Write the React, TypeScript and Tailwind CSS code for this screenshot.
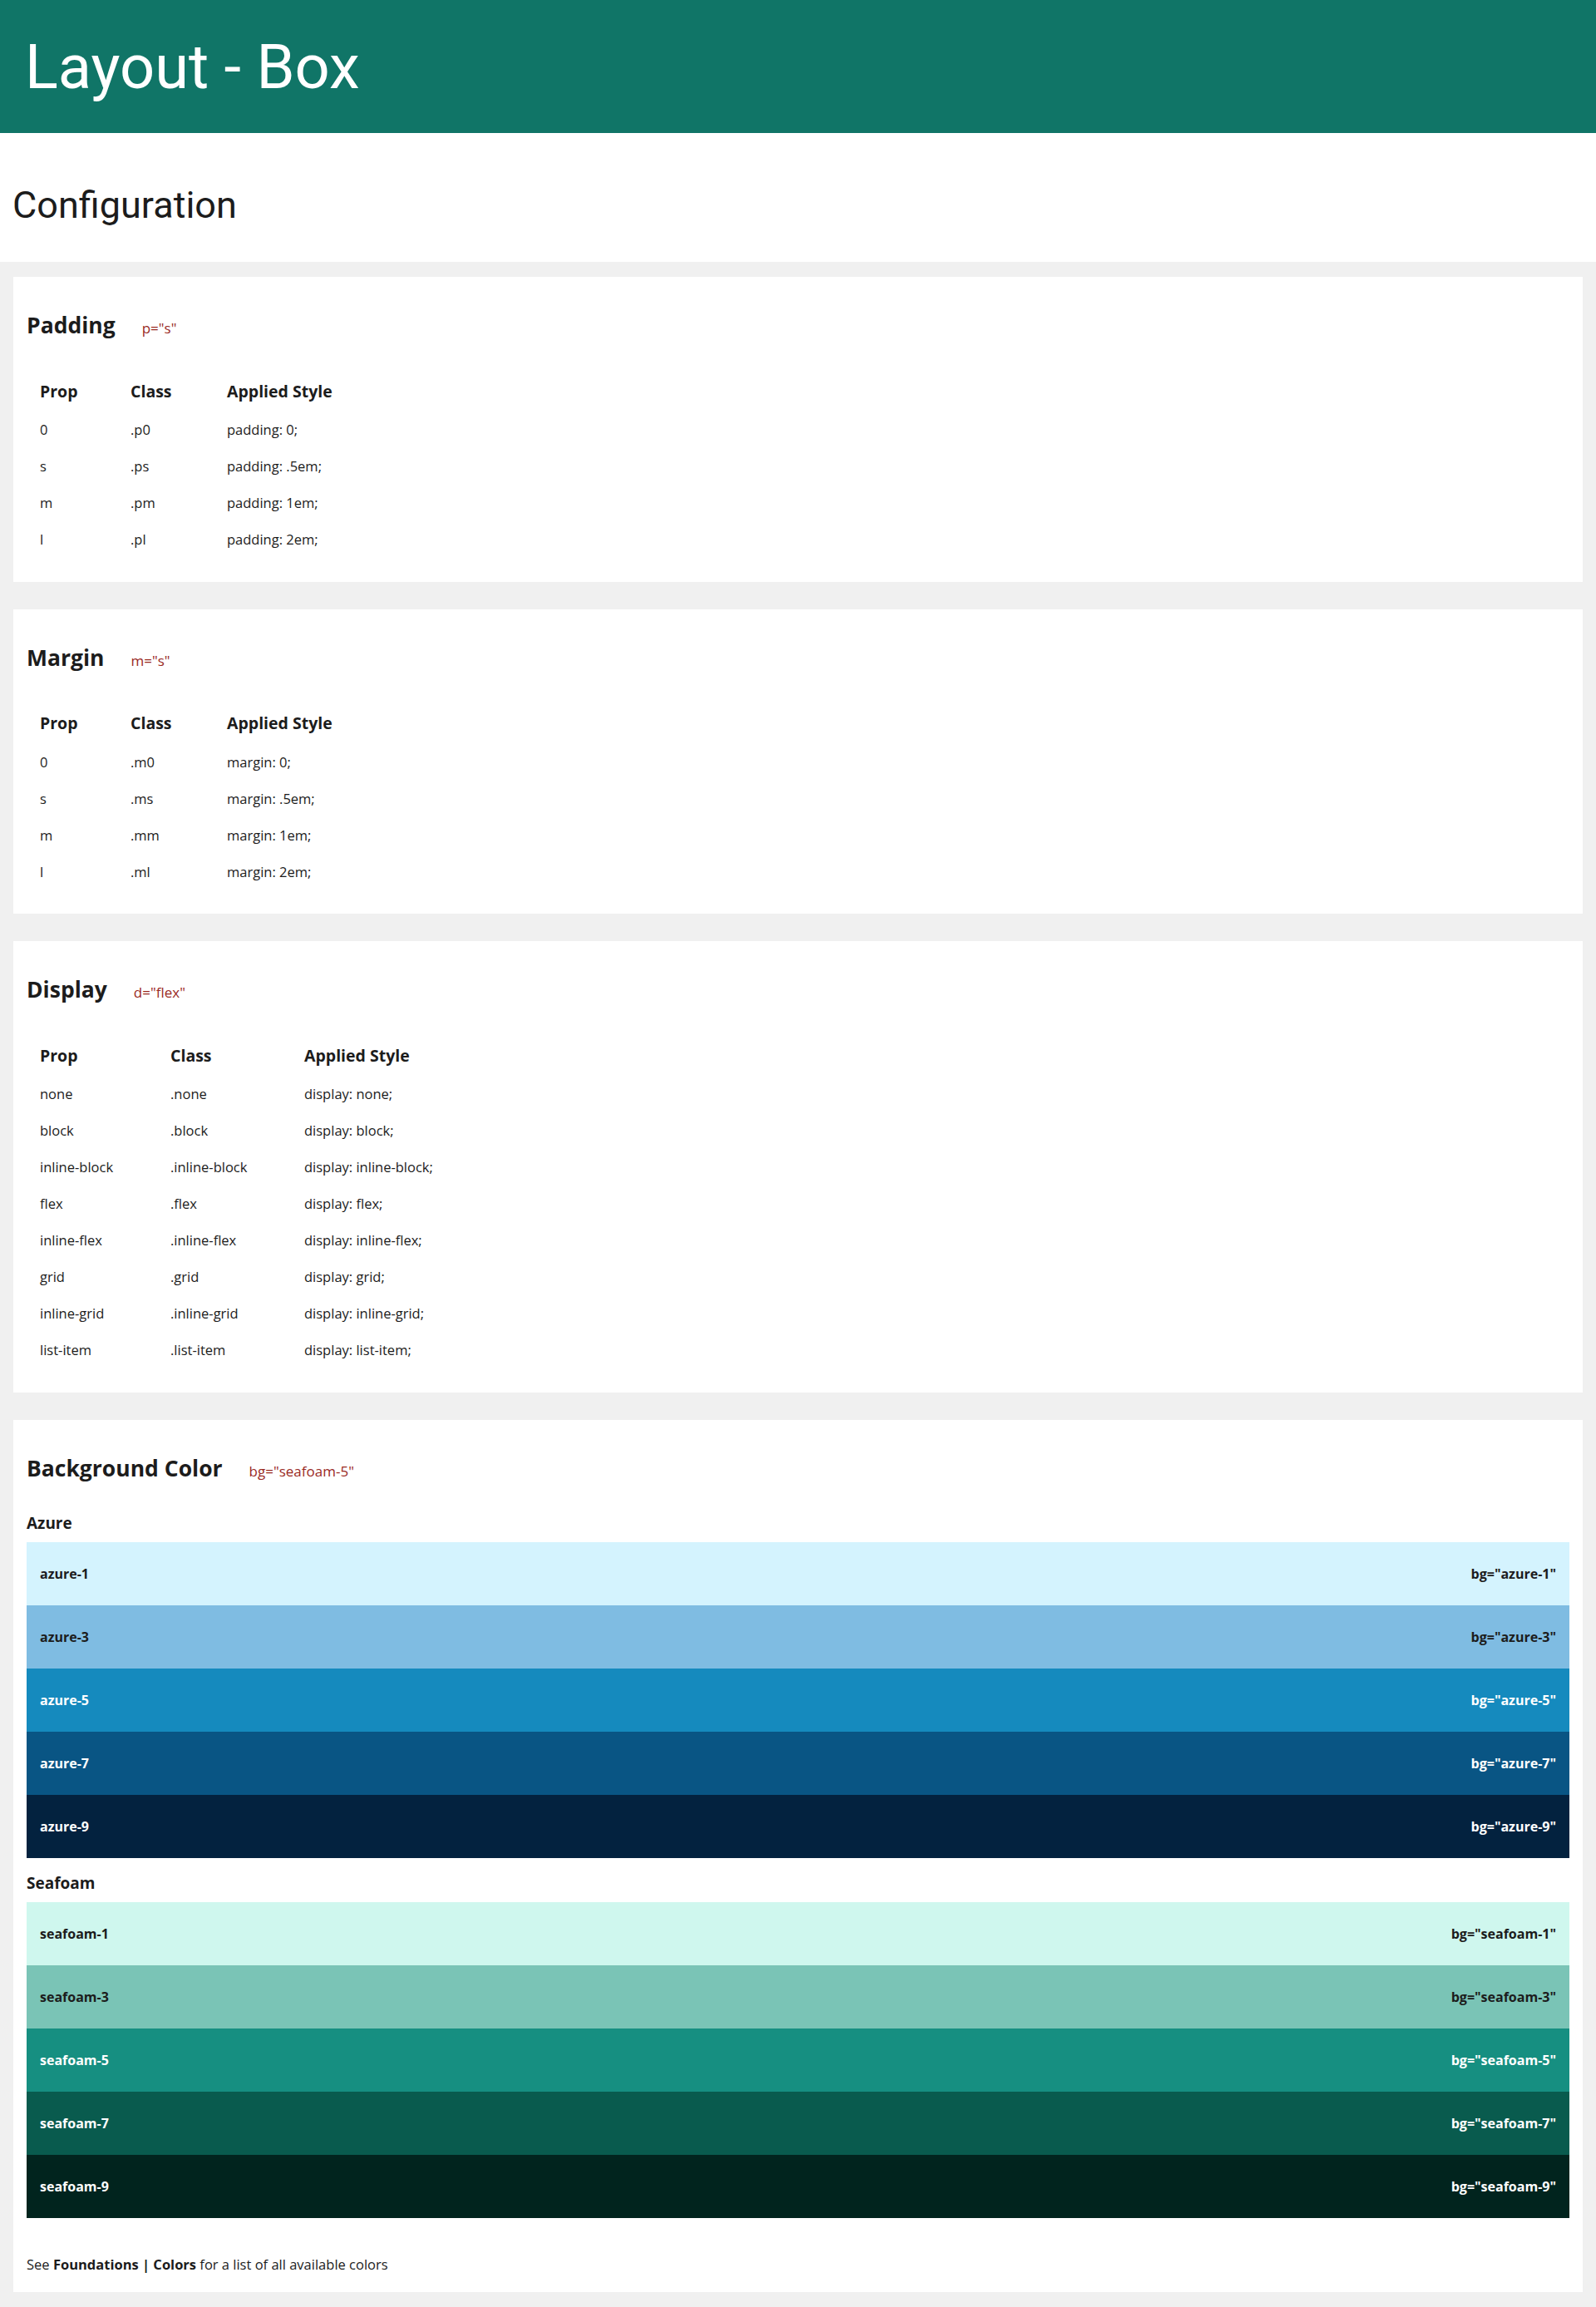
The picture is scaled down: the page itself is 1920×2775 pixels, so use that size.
import type { ReactNode } from 'react'

interface StyleRow {
  prop: string
  cls: string
  style: string
}

interface Swatch {
  name: string
  bg: string
  light: boolean
}

const paddingRows: StyleRow[] = [
  { prop: '0', cls: '.p0', style: 'padding: 0;' },
  { prop: 's', cls: '.ps', style: 'padding: .5em;' },
  { prop: 'm', cls: '.pm', style: 'padding: 1em;' },
  { prop: 'l', cls: '.pl', style: 'padding: 2em;' },
]

const marginRows: StyleRow[] = [
  { prop: '0', cls: '.m0', style: 'margin: 0;' },
  { prop: 's', cls: '.ms', style: 'margin: .5em;' },
  { prop: 'm', cls: '.mm', style: 'margin: 1em;' },
  { prop: 'l', cls: '.ml', style: 'margin: 2em;' },
]

const displayRows: StyleRow[] = [
  'none',
  'block',
  'inline-block',
  'flex',
  'inline-flex',
  'grid',
  'inline-grid',
  'list-item',
].map((value) => ({ prop: value, cls: `.${value}`, style: `display: ${value};` }))

const azure: Swatch[] = [
  { name: 'azure-1', bg: 'bg-[#d4f3fe]', light: true },
  { name: 'azure-3', bg: 'bg-[#7fbce2]', light: true },
  { name: 'azure-5', bg: 'bg-[#158abe]', light: false },
  { name: 'azure-7', bg: 'bg-[#095584]', light: false },
  { name: 'azure-9', bg: 'bg-[#03223f]', light: false },
]

const seafoam: Swatch[] = [
  { name: 'seafoam-1', bg: 'bg-[#cff7ee]', light: true },
  { name: 'seafoam-3', bg: 'bg-[#7ac4b6]', light: true },
  { name: 'seafoam-5', bg: 'bg-[#168f81]', light: false },
  { name: 'seafoam-7', bg: 'bg-[#095b4e]', light: false },
  { name: 'seafoam-9', bg: 'bg-[#01241e]', light: false },
]

const Card = ({ title, code, children }: { title: string; code: string; children: ReactNode }) => (
  <section className="bg-white px-4 pt-[44px]">
    <div className="flex items-baseline gap-8">
      <h3 className="text-[26.5px] font-bold leading-[28px]">{title}</h3>
      <span className="text-[17px] text-[#9a2a1f]">{code}</span>
    </div>
    {children}
  </section>
)

const StyleTable = ({ rows, widths }: { rows: StyleRow[]; widths: [string, string] }) => (
  <table className="mt-[38px] mb-[28px] border-collapse text-left">
    <thead>
      <tr className="h-[50px] text-[19.5px] font-bold">
        <th className={`${widths[0]} pl-4`}>Prop</th>
        <th className={widths[1]}>Class</th>
        <th>Applied Style</th>
      </tr>
    </thead>
    <tbody>
      {rows.map((row) => (
        <tr key={row.prop} className="h-[44px] text-[16.5px]">
          <td className="pl-4">{row.prop}</td>
          <td>{row.cls}</td>
          <td>{row.style}</td>
        </tr>
      ))}
    </tbody>
  </table>
)

const SwatchList = ({ items }: { items: Swatch[] }) => (
  <div className="mt-[9px]">
    {items.map((item) => (
      <div
        key={item.name}
        className={`flex h-[76px] items-center justify-between px-4 text-[16px] font-bold ${item.bg} ${
          item.light ? 'text-[#1c1c1c]' : 'text-white'
        }`}
      >
        <span>{item.name}</span>
        <span>bg="{item.name}"</span>
      </div>
    ))}
  </div>
)

export default function App() {
  return (
    <div className="min-h-screen bg-[#f0f0f0] text-[#1c1c1c] [font-family:'Open_Sans',sans-serif]">
      <header className="flex h-[160px] items-center bg-[#107567] pl-[30px]">
        <h1 className="text-[74px] font-normal text-white [font-family:Roboto,sans-serif]">
          Layout - Box
        </h1>
      </header>

      <div className="bg-white pt-[60px] pb-[41px] pl-[15px]">
        <h2 className="text-[45px] font-normal leading-[54px] [font-family:Roboto,sans-serif]">
          Configuration
        </h2>
      </div>

      <main className="flex flex-col gap-[33px] px-4 pt-[18px] pb-[19px]">
        <Card title="Padding" code={'p="s"'}>
          <StyleTable rows={paddingRows} widths={['w-[125px]', 'w-[116px]']} />
        </Card>

        <Card title="Margin" code={'m="s"'}>
          <StyleTable rows={marginRows} widths={['w-[125px]', 'w-[116px]']} />
        </Card>

        <Card title="Display" code={'d="flex"'}>
          <StyleTable rows={displayRows} widths={['w-[173px]', 'w-[161px]']} />
        </Card>

        <Card title="Background Color" code={'bg="seafoam-5"'}>
          <h4 className="mt-9 text-[19px] font-bold leading-[28px]">Azure</h4>
          <SwatchList items={azure} />
          <h4 className="mt-4 text-[19px] font-bold leading-[28px]">Seafoam</h4>
          <SwatchList items={seafoam} />
          <p className="mt-[45px] pb-[22px] text-[16.5px] leading-[22px]">
            See <strong>Foundations | Colors</strong> for a list of all available colors
          </p>
        </Card>
      </main>
    </div>
  )
}
